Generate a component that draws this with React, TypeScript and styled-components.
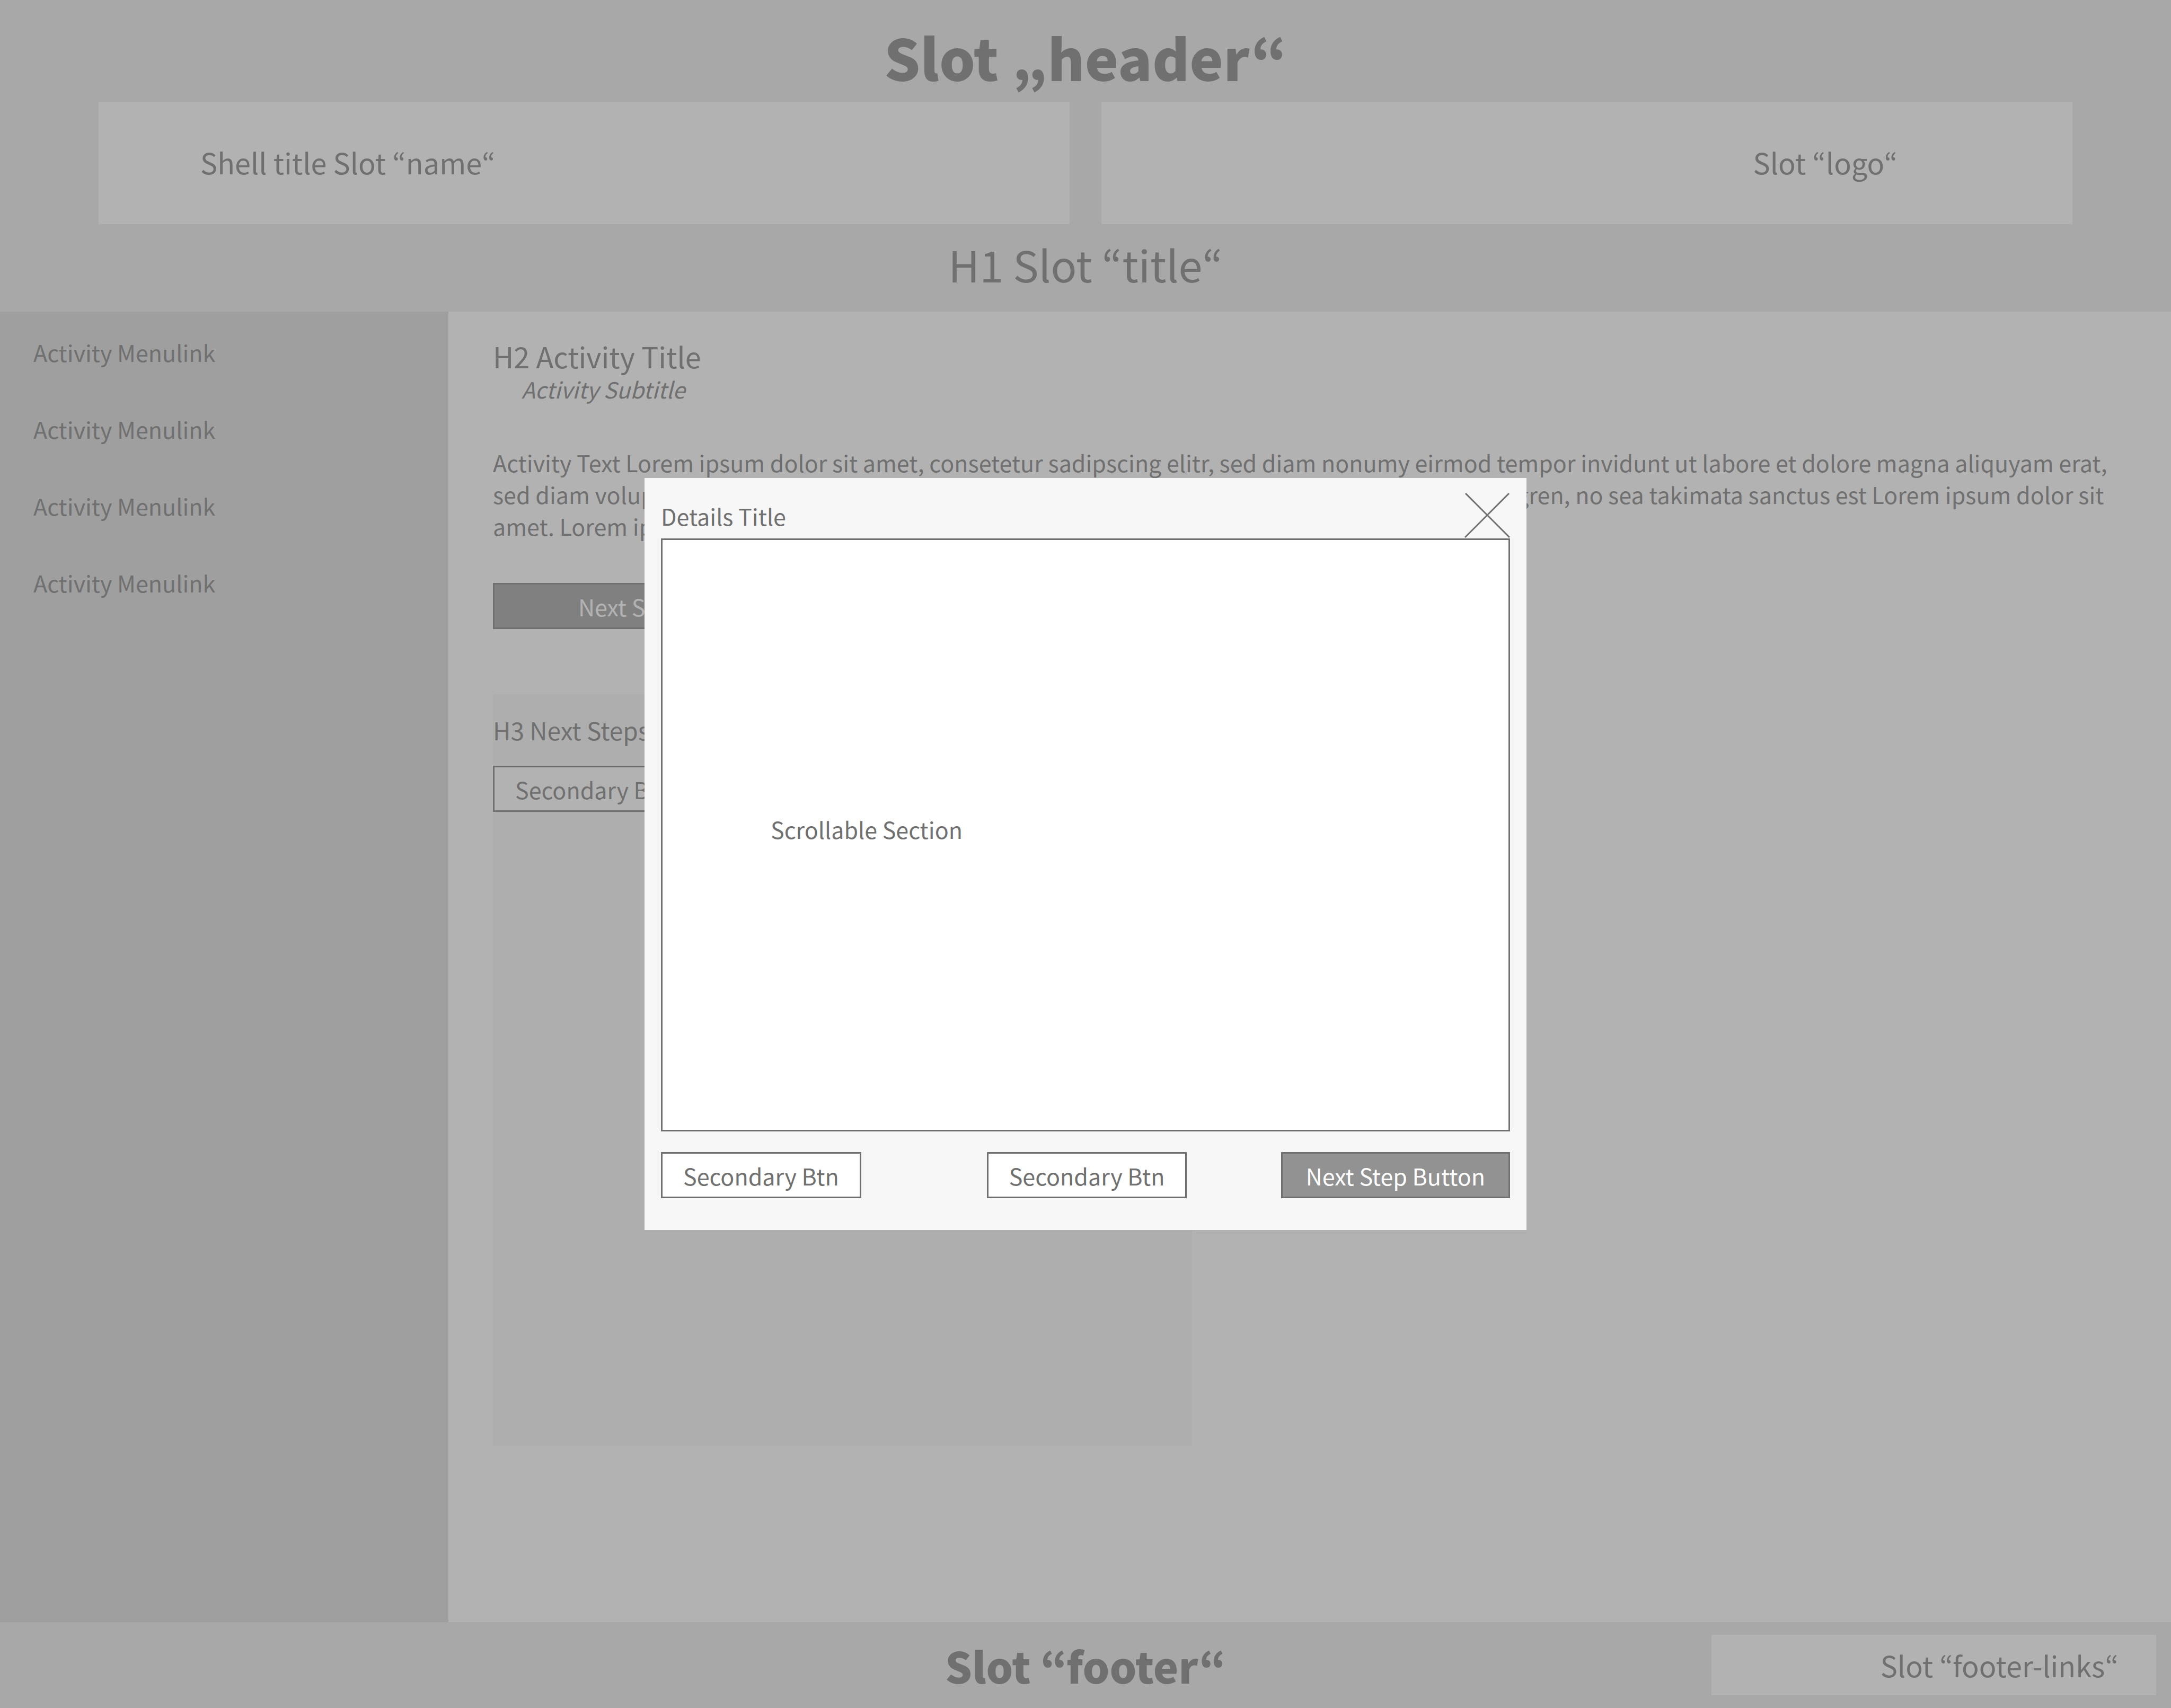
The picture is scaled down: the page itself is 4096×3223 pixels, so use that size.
import React from "react";
import styled, { createGlobalStyle, css } from "styled-components";

const ink = "#707070";
const surface = "#ffffff";

const GlobalStyle = createGlobalStyle`
  *, *::before, *::after { box-sizing: border-box; }
  body {
    margin: 0;
    color: ${ink};
    background: ${surface};
    font-family: "Noto Sans CJK KR", "Noto Sans", sans-serif;
    font-size: 43px;
    line-height: 60px;
  }
  h1, h2, h3, p, ul { margin: 0; padding: 0; font-weight: 400; }
`;

const Page = styled.div`
  display: flex;
  flex-direction: column;
  min-height: 100vh;
`;

const Header = styled.header`
  padding: 22px 186px 15px;
  background: #e9e9e9;
  text-align: center;
`;

const SlotName = styled.p<{ $size: number; $line: number }>`
  font-size: ${(p) => p.$size}px;
  line-height: ${(p) => p.$line}px;
  font-weight: 900;
`;

const HeaderSlots = styled.div`
  display: flex;
  gap: 60px;
`;

const HeaderSlot = styled.div<{ $end?: boolean }>`
  flex: 1;
  display: flex;
  align-items: center;
  justify-content: ${(p) => (p.$end ? "flex-end" : "flex-start")};
  height: 231px;
  padding: 0 330px 4px 192px;
  background: ${surface};
  font-size: 54px;
`;

const PageTitle = styled.h1`
  font-size: 81px;
  line-height: 150px;
`;

const Body = styled.div`
  flex: 1;
  display: flex;
`;

const Sidebar = styled.nav`
  flex: none;
  width: 846px;
  padding: 46px 63px;
  background: #d5d5d5;
`;

const Menu = styled.ul`
  display: flex;
  flex-direction: column;
  gap: 85px;
  list-style: none;
`;

const MenuLink = styled.a`
  color: inherit;
  text-decoration: none;
`;

const Main = styled.main`
  flex: 1;
  min-width: 0;
  padding: 52px 116px 120px 84px;
`;

const ActivityTitle = styled.h2`
  font-size: 54px;
  line-height: 64px;
`;

const ActivitySubtitle = styled.p`
  padding-left: 54px;
  font-size: 42px;
  font-style: italic;
`;

const ActivityText = styled.p`
  margin: 78px 0;
`;

const Button = styled.button<{ $primary?: boolean; $wide?: boolean }>`
  height: 87px;
  padding: 0 ${(p) => (p.$wide ? 158 : p.$primary ? 44 : 39)}px;
  border: 3px solid ${ink};
  background: ${surface};
  color: ${ink};
  font: inherit;
  white-space: nowrap;
  ${(p) =>
    p.$primary &&
    css`
      background: #929292;
      color: ${surface};
    `}
`;

const NextSteps = styled.section`
  width: 1319px;
  max-width: 100%;
  height: 1418px;
  margin-top: 123px;
  padding-top: 37px;
  background: #f7f7f7;
`;

const NextStepsTitle = styled.h3`
  margin-bottom: 38px;
  font-size: 46px;
`;

const Footer = styled.footer`
  display: grid;
  grid-template-columns: 1fr auto 1fr;
  align-items: center;
  height: 162px;
  padding: 0 28px;
  background: #e9e9e9;
`;

const FooterLinks = styled.div`
  grid-column: 3;
  justify-self: end;
  display: flex;
  align-items: center;
  justify-content: flex-end;
  width: 839px;
  height: 114px;
  padding-right: 71px;
  background: ${surface};
  font-size: 54px;
`;

const FooterName = styled(SlotName)`
  grid-column: 2;
`;

const Backdrop = styled.div`
  position: fixed;
  inset: 0;
  display: flex;
  align-items: center;
  justify-content: center;
  background: rgba(112, 112, 112, 0.54);
`;

const Dialog = styled.section`
  width: 1664px;
  max-width: 100%;
  padding: 0 31px 60px;
  background: #f7f7f7;
`;

const DialogHeader = styled.div`
  display: flex;
  align-items: center;
  justify-content: space-between;
  padding-top: 28px;
`;

const DialogTitle = styled.h2`
  font-size: 43px;
`;

const CloseButton = styled.button`
  display: block;
  width: 86px;
  height: 86px;
  padding: 0;
  border: 0;
  background: none;
  color: inherit;

  svg { display: block; }
`;

const ScrollArea = styled.div`
  display: flex;
  align-items: center;
  height: 1119px;
  padding: 0 204px 24px;
  border: 3px solid ${ink};
  background: ${surface};
  overflow: auto;
`;

const DialogActions = styled.div`
  display: flex;
  justify-content: space-between;
  margin-top: 39px;
`;

const SecondaryActions = styled.div`
  display: flex;
  gap: 237px;
`;

const menuItems = ["Activity Menulink", "Activity Menulink", "Activity Menulink", "Activity Menulink"];

export default function App() {
  return (
    <>
      <GlobalStyle />
      <Page>
        <Header>
          <SlotName $size={107} $line={170}>Slot „header“</SlotName>
          <HeaderSlots>
            <HeaderSlot>Shell title Slot “name“</HeaderSlot>
            <HeaderSlot $end>Slot “logo“</HeaderSlot>
          </HeaderSlots>
          <PageTitle>H1 Slot “title“</PageTitle>
        </Header>

        <Body>
          <Sidebar>
            <Menu>
              {menuItems.map((label, i) => (
                <li key={i}>
                  <MenuLink href="#">{label}</MenuLink>
                </li>
              ))}
            </Menu>
          </Sidebar>

          <Main>
            <ActivityTitle>H2 Activity Title</ActivityTitle>
            <ActivitySubtitle>Activity Subtitle</ActivitySubtitle>
            <ActivityText>
              Activity Text Lorem ipsum dolor sit amet, consetetur sadipscing elitr, sed diam nonumy eirmod tempor
              invidunt ut labore et dolore magna aliquyam erat, sed diam voluptua. At vero eos et accusam et justo duo
              dolores et ea rebum. Stet clita kasd gubergren, no sea takimata sanctus est Lorem ipsum dolor sit amet.
              Lorem ipsum dolor sit amet.
            </ActivityText>
            <Button $primary $wide>Next Step Button</Button>
            <NextSteps>
              <NextStepsTitle>H3 Next Steps</NextStepsTitle>
              <Button>Secondary Btn</Button>
            </NextSteps>
          </Main>
        </Body>

        <Footer>
          <FooterName $size={80} $line={114}>Slot “footer“</FooterName>
          <FooterLinks>Slot “footer-links“</FooterLinks>
        </Footer>
      </Page>

      <Backdrop>
        <Dialog role="dialog" aria-modal="true" aria-labelledby="details-title">
          <DialogHeader>
            <DialogTitle id="details-title">Details Title</DialogTitle>
            <CloseButton aria-label="Close">
              <svg width="86" height="86" viewBox="0 0 86 86" fill="none" stroke="currentColor" strokeWidth="3">
                <path d="M2 1L85 84M84 1L1 84" />
              </svg>
            </CloseButton>
          </DialogHeader>
          <ScrollArea>Scrollable Section</ScrollArea>
          <DialogActions>
            <SecondaryActions>
              <Button>Secondary Btn</Button>
              <Button>Secondary Btn</Button>
            </SecondaryActions>
            <Button $primary>Next Step Button</Button>
          </DialogActions>
        </Dialog>
      </Backdrop>
    </>
  );
}
